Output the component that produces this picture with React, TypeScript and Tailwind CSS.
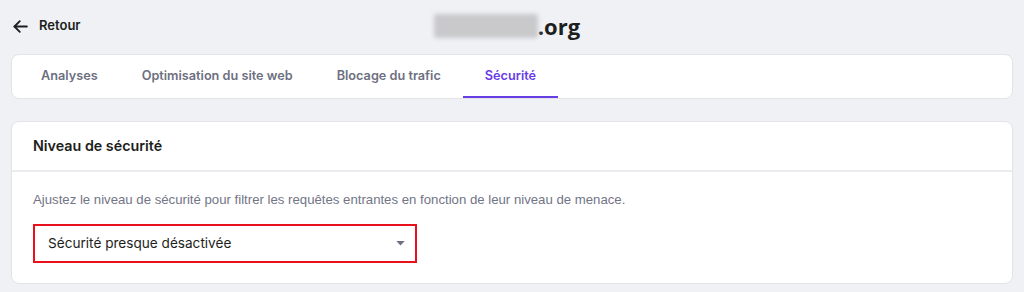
import React from "react";

export default function App() {
  const tabs = ["Analyses", "Optimisation du site web", "Blocage du trafic", "Sécurité"];
  return (
    <div className="w-[1024px] h-[292px] bg-[#f0f1f5] overflow-hidden" style={{ fontFamily: "Inter, 'Noto Sans', sans-serif" }}>
      <div className="h-[50px] grid grid-cols-[1fr_auto_1fr] items-center pl-[12px] pr-[22px]">
        <div className="flex items-center gap-[10px] pt-[2px]">
          <svg width="17" height="17" viewBox="0 0 24 24" fill="none" stroke="#1d1e20" strokeWidth="2.6" strokeLinecap="round" strokeLinejoin="round">
            <path d="M21 12H3.5" />
            <path d="M11 4.5L3.5 12l7.5 7.5" />
          </svg>
          <span className="text-[13px] font-semibold text-[#1d1e20]">Retour</span>
        </div>
        <div className="flex items-center pt-[2px]">
          <div className="w-[104px] h-[24px] bg-[#c9c9cc] blur-[2px] rounded-[2px]" />
          <span className="text-[22px] font-bold text-[#1d1e20] leading-none" style={{ fontFamily: "'Open Sans', sans-serif" }}>.org</span>
        </div>
        <div />
      </div>
      <div className="mx-[11px] mt-[4px] h-[45px] bg-white rounded-[8px] border border-[#e3e4e8] flex items-stretch pl-[7px]">
        {tabs.map((t, i) => {
          const active = i === 3;
          return (
            <div key={t} className={`px-[22px] flex items-center text-[12.7px] font-semibold border-b-2 ${active ? "text-[#673de6] border-[#673de6]" : "text-[#6d7081] border-transparent"}`}>
              {t}
            </div>
          );
        })}
      </div>
      <div className="mx-[11px] mt-[22px] h-[163px] bg-white rounded-[8px] border border-[#e3e4e8] flex flex-col">
        <div className="h-[50px] border-b-2 border-[#eaebef] flex items-center px-[21px]">
          <span className="text-[14.3px] font-semibold text-[#1d1e20]">Niveau de sécurité</span>
        </div>
        <div className="px-[21px] pt-[18px]">
          <p className="text-[13.2px] text-[#727586]" style={{ fontFamily: "'Liberation Sans', Arial, sans-serif" }}>
            Ajustez le niveau de sécurité pour filtrer les requêtes entrantes en fonction de leur niveau de menace.
          </p>
          <div className="mt-[14px] w-[384px] h-[39px] border-2 border-[#e8101a] flex items-center justify-between pl-[13px] pr-[10px]">
            <span className="text-[13.6px] text-[#1d1e20]">Sécurité presque désactivée</span>
            <svg width="9" height="5" viewBox="0 0 10 6"><path d="M0 0h10L5 5.5z" fill="#6d7081" /></svg>
          </div>
        </div>
      </div>
    </div>
  );
}
